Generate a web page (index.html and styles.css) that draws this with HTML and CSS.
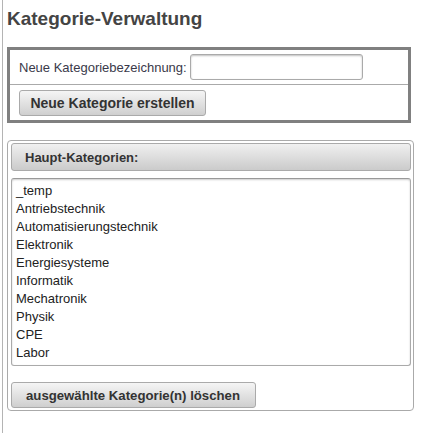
FILE: index.html
```html
<!DOCTYPE html>
<html lang="de">
<head>
<meta charset="utf-8">
<title>Kategorie-Verwaltung</title>
<link rel="stylesheet" href="styles.css">
</head>
<body>
<div class="page">
  <h1 class="title">Kategorie-Verwaltung</h1>
  <div class="newbox">
    <div class="row row-top">
      <label class="label" for="neu">Neue Kategoriebezeichnung:</label>
      <input class="input" id="neu" type="text">
    </div>
    <div class="row">
      <button class="btn btn-create" type="button">Neue Kategorie erstellen</button>
    </div>
  </div>
  <div class="listbox-panel">
    <div class="panel-head">Haupt-Kategorien:</div>
    <div class="list">
      <div class="item">_temp</div>
      <div class="item">Antriebstechnik</div>
      <div class="item">Automatisierungstechnik</div>
      <div class="item">Elektronik</div>
      <div class="item">Energiesysteme</div>
      <div class="item">Informatik</div>
      <div class="item">Mechatronik</div>
      <div class="item">Physik</div>
      <div class="item">CPE</div>
      <div class="item">Labor</div>
    </div>
    <button class="btn btn-delete" type="button">ausgewählte Kategorie(n) löschen</button>
  </div>
</div>
</body>
</html>
```
FILE: styles.css
```css
html, body {
  margin: 0;
  padding: 0;
  background: #fff;
  font-family: "Liberation Sans", Arial, sans-serif;
}

.page {
  margin-left: 2px;
  border-left: 1px solid #b4b4b4;
  min-height: 100vh;
  box-sizing: border-box;
  padding: 8px 0 0 4px;
}

.title {
  margin: 0 0 17px;
  font-size: 19px;
  line-height: 22px;
  font-weight: bold;
  color: #444;
}

.newbox {
  width: 404px;
  box-sizing: border-box;
  border: 3px solid #808080;
}

.row {
  display: flex;
  align-items: center;
  height: 35px;
  padding-left: 9px;
}

.row-top {
  height: 34px;
  border-bottom: 1px solid #aaa;
}

.label {
  font-size: 13px;
  color: #3a3a4a;
}

.input {
  margin: 0 0 0 3px;
  width: 173px;
  height: 26px;
  box-sizing: border-box;
  border: 1px solid #aaa;
  border-radius: 3px;
  box-shadow: inset 0 1px 2px rgba(0, 0, 0, 0.25);
  background: #fff;
  padding: 0 4px;
  font: 13px "Liberation Sans", Arial, sans-serif;
}

.btn {
  height: 26px;
  box-sizing: border-box;
  border: 1px solid #aaa;
  border-radius: 3px;
  background: linear-gradient(#f5f5f5, #cfcfcf);
  font: bold 13px "Liberation Sans", Arial, sans-serif;
  color: #333;
  padding: 0 13px;
  margin: 0;
  cursor: pointer;
}

.btn-create {
  width: 187px;
  font-size: 14px;
  padding: 0;
}

.listbox-panel {
  margin-top: 17px;
  width: 407px;
  box-sizing: border-box;
  border: 1px solid #aaa;
  border-radius: 4px;
  padding: 2px 2px 2px 3px;
}

.panel-head {
  height: 28px;
  box-sizing: border-box;
  border: 1px solid #aaa;
  border-radius: 3px;
  background: linear-gradient(#f0f0f0, #cbcbcb);
  display: flex;
  align-items: center;
  padding-left: 13px;
  font-weight: bold;
  font-size: 13px;
  color: #333;
}

.list {
  margin-top: 7px;
  height: 188px;
  box-sizing: border-box;
  border: 1px solid #aaa;
  border-top-color: #999;
  border-radius: 3px;
  box-shadow: inset 0 1px 2px rgba(0, 0, 0, 0.2);
  padding: 3px 4px 3px 4px;
  font-size: 13px;
  line-height: 18px;
  color: #222;
}

.btn-delete {
  margin-top: 16px;
  width: 245px;
  padding: 0 0 0 14px;
  text-align: left;
  font-size: 13.2px;
  display: block;
}
```
